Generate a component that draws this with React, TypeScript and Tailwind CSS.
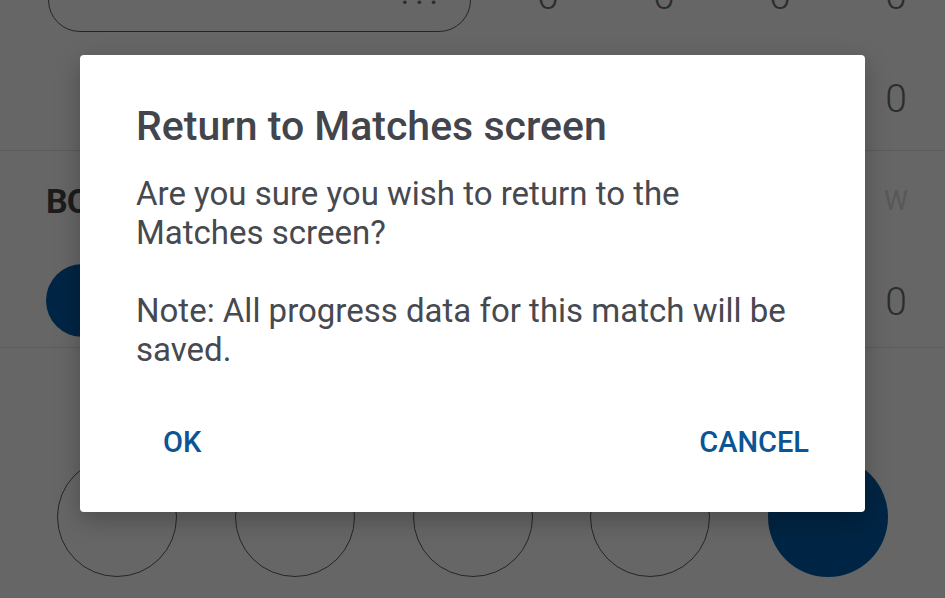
import React from "react";

const font = { fontFamily: "Roboto, 'Noto Sans', 'Liberation Sans', sans-serif" };

function Zero({ className = "" }: { className?: string }) {
  return (
    <div className={"w-[116px] shrink-0 text-center text-[39px] leading-[39px] font-light text-[#2c2c2c] " + className}>0</div>
  );
}

export default function App() {
  return (
    <div style={font} className="relative w-[945px] h-[598px] overflow-hidden bg-[#666666]">
      {/* underlying page (dimmed) */}
      <div className="flex flex-col">
        {/* row A */}
        <div className="-mt-[32px] flex h-[64px]">
          <div className="ml-[48px] flex h-[64px] w-[423px] shrink-0 items-start justify-end rounded-[32px] border border-[#262626] pr-[26px]">
            <span className="mt-[5px] text-[32px] leading-[38px] tracking-[6px] text-[#2c2c2c]">...</span>
          </div>
          <div className="ml-[19px] flex shrink-0">
            <Zero className="pt-[9px]" />
            <Zero className="pt-[9px]" />
            <Zero className="pt-[9px]" />
            <Zero className="pt-[9px]" />
          </div>
        </div>
        {/* row B */}
        <div className="flex h-[118px] justify-end">
          <Zero className="mr-[-9px] pt-[48px]" />
        </div>
        <div className="h-[1px] bg-[#5b5b5b]" />
        {/* row C */}
        <div className="flex h-[196px]">
          <div className="flex flex-1 flex-col pl-[46px]">
            <div className="mt-[30px] text-[34px] leading-[40px] font-bold tracking-[-1px] text-[#1c1c1c]">BOWLER</div>
            <div className="mt-[43px] h-[73px] w-[73px] rounded-full bg-[#002544]" />
          </div>
          <div className="mr-[-9px] flex w-[116px] flex-col items-center">
            <div className="mt-[35px] text-[27px] leading-[30px] text-[#585858]">W</div>
            <div className="mt-[67px] text-[39px] leading-[39px] font-light text-[#2c2c2c]">0</div>
          </div>
        </div>
        <div className="h-[1px] bg-[#5b5b5b]" />
        {/* row D */}
        <div className="mt-[109px] flex gap-[57.75px] pl-[57px]">
          <div className="h-[120px] w-[120px] rounded-full border border-[#262626]" />
          <div className="h-[120px] w-[120px] rounded-full border border-[#262626]" />
          <div className="h-[120px] w-[120px] rounded-full border border-[#262626]" />
          <div className="h-[120px] w-[120px] rounded-full border border-[#262626]" />
          <div className="h-[120px] w-[120px] rounded-full bg-[#002544]" />
        </div>
      </div>

      {/* dialog */}
      <div className="absolute left-[80px] top-[55px] flex h-[457px] w-[785px] flex-col rounded-[4px] bg-white px-[56px] shadow-[0_8px_24px_rgba(0,0,0,0.25)]">
        <div className="mt-[49px] text-[41px] leading-[44px] font-medium text-[#42454c]">Return to Matches screen</div>
        <div className="mt-[26px] text-[33px] leading-[39px] text-[#46494f]">
          <p>Are you sure you wish to return to the Matches screen?</p>
          <p className="mt-[39px]">Note: All progress data for this match will be saved.</p>
        </div>
        <div className="mt-[55px] flex justify-between pl-[27px] text-[29px] leading-[36px] font-medium text-[#0c5595]">
          <span>OK</span>
          <span>CANCEL</span>
        </div>
      </div>
    </div>
  );
}
